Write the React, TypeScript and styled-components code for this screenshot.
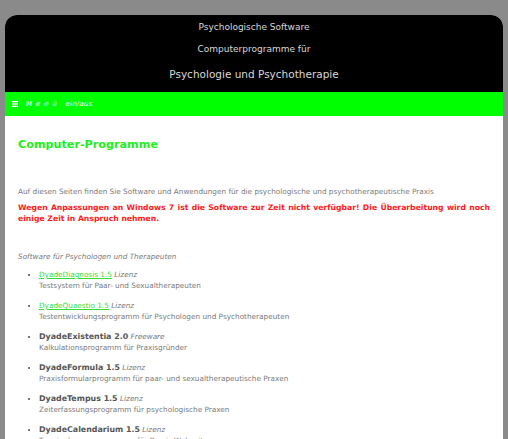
import styled, { createGlobalStyle } from "styled-components";

const GlobalStyle = createGlobalStyle`
  html, body {
    margin: 0;
    padding: 0;
    background: #8a8a8a;
    font-family: "DejaVu Sans", Verdana, sans-serif;
  }
`;

const programs = [
  { name: "DyadeDiagnosis 1.5", kind: "Lizenz", desc: "Testsystem für Paar- und Sexualtherapeuten", link: true },
  { name: "DyadeQuaestio 1.5", kind: "Lizenz", desc: "Testentwicklungsprogramm für Psychologen und Psychotherapeuten", link: true },
  { name: "DyadeExistentia 2.0", kind: "Freeware", desc: "Kalkulationsprogramm für Praxisgründer", link: false },
  { name: "DyadeFormula 1.5", kind: "Lizenz", desc: "Praxisformularprogramm für paar- und sexualtherapeutische Praxen", link: false },
  { name: "DyadeTempus 1.5", kind: "Lizenz", desc: "Zeiterfassungsprogramm für psychologische Praxen", link: false },
  { name: "DyadeCalendarium 1.5", kind: "Lizenz", desc: "Terminplanungsprogramm für Praxis-Webseiten", link: false },
];

export default function App() {
  return (
    <>
      <GlobalStyle />
      <Page>
        <Card>
          <Header>
            <SubTitle>Psychologische Software</SubTitle>
            <SubTitle>Computerprogramme für</SubTitle>
            <MainTitle>Psychologie und Psychotherapie</MainTitle>
          </Header>
          <MenuBar>
            <svg width="6" height="6" viewBox="0 0 6 6">
              <rect x="0" y="0" width="6" height="1.3" fill="#fff" />
              <rect x="0" y="2.35" width="6" height="1.3" fill="#fff" />
              <rect x="0" y="4.7" width="6" height="1.3" fill="#fff" />
            </svg>
            <MenuLabel $spacing={0.8}>M e n ü</MenuLabel>
            <MenuLabel $spacing={0.2}>ein/aus</MenuLabel>
          </MenuBar>
          <Content>
            <Heading>Computer-Programme</Heading>
            <Intro>
              Auf diesen Seiten finden Sie Software und Anwendungen für die psychologische und psychotherapeutische Praxis
            </Intro>
            <Warning>
              Wegen Anpassungen an Windows 7 ist die Software zur Zeit nicht verfügbar! Die Überarbeitung wird noch einige Zeit in Anspruch nehmen.
            </Warning>
            <Section>Software für Psychologen und Therapeuten</Section>
            <List>
              {programs.map((p) => (
                <Item key={p.name}>
                  <TitleLine>
                    {p.link ? <ProgLink href="#">{p.name}</ProgLink> : <ProgName>{p.name}</ProgName>}{" "}
                    <Kind>{p.kind}</Kind>
                  </TitleLine>
                  <Desc>{p.desc}</Desc>
                </Item>
              ))}
            </List>
          </Content>
        </Card>
      </Page>
    </>
  );
}

const Page = styled.div`
  padding: 15px 5px 0 5px;
  height: 424px;
  overflow: hidden;
`;
const Card = styled.div`
  background: #fff;
  border-radius: 12px 12px 0 0;
  overflow: hidden;
  min-height: 500px;
`;
const Header = styled.div`
  display: flex;
  flex-direction: column;
  align-items: center;
  background: #000;
  height: 77px;
  padding-top: 5px;
  box-sizing: border-box;
`;
const SubTitle = styled.div`
  color: #d8d8d8;
  font-size: 9px;
  line-height: 14px;
  margin-bottom: 8px;
`;
const MainTitle = styled.div`
  color: #d8d8d8;
  font-size: 10.5px;
  line-height: 16px;
  margin-top: 2px;
`;
const MenuBar = styled.div`
  display: flex;
  align-items: center;
  gap: 8px;
  background: #00ff00;
  height: 24px;
  padding-left: 7px;
`;
const MenuLabel = styled.span<{ $spacing: number }>`
  color: #fff;
  font-size: 7px;
  font-style: italic;
  letter-spacing: ${(p) => p.$spacing}px;
`;
const Content = styled.div`
  padding: 20px 13px 0 13px;
`;
const Heading = styled.h1`
  margin: 0 0 32px 0;
  font-size: 11.2px;
  line-height: 18px;
  font-weight: bold;
  color: #22ee22;
`;
const Intro = styled.p`
  margin: 0 0 5px 0;
  font-size: 7.3px;
  line-height: 11px;
  color: #7a7a7a;
`;
const Warning = styled.p`
  margin: 0 0 27px 0;
  font-size: 7.7px;
  line-height: 11px;
  font-weight: bold;
  text-align: justify;
  color: #ff1a1a;
`;
const Section = styled.p`
  margin: 0 0 7px 0;
  font-size: 7.3px;
  line-height: 11px;
  font-style: italic;
  color: #7a7a7a;
`;
const List = styled.ul`
  margin: 0;
  padding: 0 0 0 21px;
  list-style: square;
  color: #777;
`;
const Item = styled.li`
  font-size: 7.3px;
  line-height: 11px;
  margin-bottom: 9px;
`;
const TitleLine = styled.div``;
const ProgLink = styled.a`
  color: #33dd33;
  text-decoration: underline;
`;
const ProgName = styled.span`
  color: #555;
  font-weight: bold;
  font-size: 7.9px;
`;
const Kind = styled.i`
  color: #777;
`;
const Desc = styled.div`
  color: #7a7a7a;
`;
